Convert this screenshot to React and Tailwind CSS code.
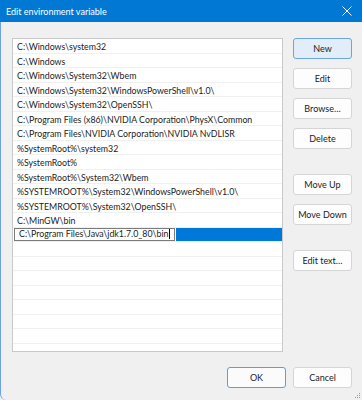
import React from "react";

const rows = [
  "C:\\Windows\\system32",
  "C:\\Windows",
  "C:\\Windows\\System32\\Wbem",
  "C:\\Windows\\System32\\WindowsPowerShell\\v1.0\\",
  "C:\\Windows\\System32\\OpenSSH\\",
  "C:\\Program Files (x86)\\NVIDIA Corporation\\PhysX\\Common",
  "C:\\Program Files\\NVIDIA Corporation\\NVIDIA NvDLISR",
  "%SystemRoot%\\system32",
  "%SystemRoot%",
  "%SystemRoot%\\System32\\Wbem",
  "%SYSTEMROOT%\\System32\\WindowsPowerShell\\v1.0\\",
  "%SYSTEMROOT%\\System32\\OpenSSH\\",
  "C:\\MinGW\\bin",
];

function Btn({ children, variant }) {
  const base =
    "w-[59px] h-[21px] rounded-[3px] border text-[9px] whitespace-nowrap flex items-center justify-center text-[#1b1b1b]";
  if (variant === "primary")
    return <div className={base + " bg-[#e1edf9] border-[#6aa6e0]"}>{children}</div>;
  if (variant === "ok")
    return <div className={base + " bg-[#fbfbfb] border-[#5c9ce0]"}>{children}</div>;
  return <div className={base + " bg-[#fdfdfd] border-[#d5d5d5]"}>{children}</div>;
}

export default function App() {
  return (
    <div
      className="w-[362px] h-[400px] bg-[#f0f0f0] flex flex-col overflow-hidden relative"
      style={{ fontFamily: 'Lato, "Noto Sans", sans-serif' }}
    >
      <div className="h-[22px] bg-[#0078d4] flex items-center justify-between pl-[6px] pr-[8px] shrink-0">
        <span className="text-white text-[9px] leading-none pt-px">Edit environment variable</span>
        <svg width="10" height="10" viewBox="0 0 10 10" className="mr-[2px]">
          <path d="M0.5 0.5 L9.5 9.5 M9.5 0.5 L0.5 9.5" stroke="white" strokeWidth="1" />
        </svg>
      </div>
      <div className="flex-1 flex flex-col border-l border-[#6ea3df] rounded-bl-[6px] pl-[11px] pt-[16px]">
        <div className="flex">
          <div className="w-[271px] h-[314px] bg-white border border-[#c9c9c9] overflow-hidden flex flex-col">
            {rows.map((r, i) => (
              <div
                key={i}
                className="h-[14.5px] shrink-0 border-b border-[#f0f0f0] pl-[4px] pt-px text-[8.8px] leading-[13px] text-[#1b1b1b] whitespace-nowrap"
              >
                {r}
              </div>
            ))}
            <div className="h-[14.5px] shrink-0 flex items-stretch border-b border-[#f0f0f0]">
              <div className="ml-[1px] pr-[4px] border border-[#7a7a7a] bg-white pl-[4px] text-[8.8px] leading-[12px] text-[#1b1b1b] whitespace-nowrap flex items-center">
                <span>C:\Program Files\Java\jdk1.7.0_80\bin</span>
                <span className="w-px h-[10px] bg-black ml-px" />
              </div>
              <div className="flex-1 ml-[1px] bg-[#0078d7]" />
            </div>
            {Array.from({ length: 9 }).map((_, i) => (
              <div key={"e" + i} className="h-[14.5px] shrink-0 border-b border-[#f0f0f0]" />
            ))}
          </div>
          <div className="ml-[10px] flex flex-col">
            <Btn variant="primary">New</Btn>
            <div className="mt-[9px]"><Btn>Edit</Btn></div>
            <div className="mt-[9px]"><Btn>Browse…</Btn></div>
            <div className="mt-[9px]"><Btn>Delete</Btn></div>
            <div className="mt-[25px]"><Btn>Move Up</Btn></div>
            <div className="mt-[9px]"><Btn>Move Down</Btn></div>
            <div className="mt-[25px]"><Btn>Edit text…</Btn></div>
          </div>
        </div>
        <div className="flex justify-end gap-[7px] mt-[15px] pr-[10px]">
          <Btn variant="ok">OK</Btn>
          <Btn>Cancel</Btn>
        </div>
      </div>
      <svg width="8" height="8" viewBox="0 0 8 8" className="absolute right-[1px] bottom-[1px]">
        <rect x="6" y="2" width="1" height="1" fill="#9a9a9a" />
        <rect x="4" y="4" width="1" height="1" fill="#9a9a9a" />
        <rect x="6" y="4" width="1" height="1" fill="#9a9a9a" />
        <rect x="2" y="6" width="1" height="1" fill="#9a9a9a" />
        <rect x="4" y="6" width="1" height="1" fill="#9a9a9a" />
        <rect x="6" y="6" width="1" height="1" fill="#9a9a9a" />
      </svg>
    </div>
  );
}
